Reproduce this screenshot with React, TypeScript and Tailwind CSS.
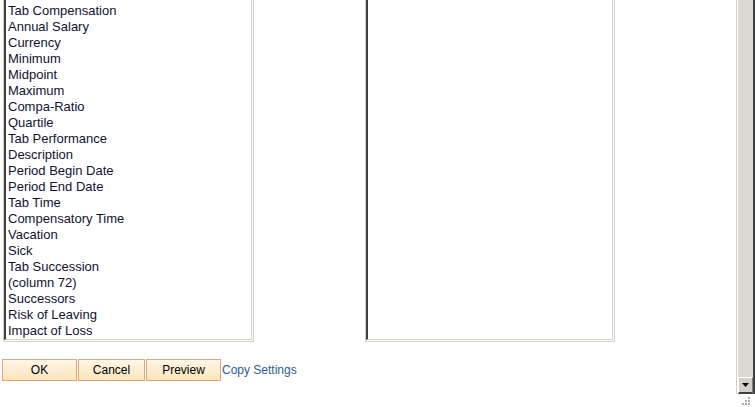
const leftItems = [
  "Tab Compensation",
  "Annual Salary",
  "Currency",
  "Minimum",
  "Midpoint",
  "Maximum",
  "Compa-Ratio",
  "Quartile",
  "Tab Performance",
  "Description",
  "Period Begin Date",
  "Period End Date",
  "Tab Time",
  "Compensatory Time",
  "Vacation",
  "Sick",
  "Tab Succession",
  "(column 72)",
  "Successors",
  "Risk of Leaving",
  "Impact of Loss",
];

const ListBox = ({ items, className }: { items: string[]; className?: string }) => {
  return (
    <div className={`h-[342px] border-l border-r border-b border-[#d4d0c8] bg-white pr-px pb-px ${className ?? ""}`}>
      <div className="h-full border-l-2 border-l-[#404040] border-r border-b border-r-[#d4d0c8] border-b-[#d4d0c8] pl-[2px] pt-[3px] overflow-hidden">
        {items.map((item) => (
          <div key={item} className="h-4 leading-4 text-[13px] text-[#111133] whitespace-nowrap">
            {item}
          </div>
        ))}
      </div>
    </div>
  );
};

const PsButton = ({ label, width }: { label: string; width: string }) => {
  return (
    <button
      type="button"
      className={`${width} h-[22px] border border-[#dba978] bg-gradient-to-b from-[#fef6e6] to-[#fce5bc] text-[12px] text-black leading-none`}
    >
      {label}
    </button>
  );
};

export default function App() {
  return (
    <div className="flex w-[755px] h-[407px] bg-white overflow-hidden" style={{ fontFamily: '"Liberation Sans", Arial, sans-serif' }}>
      <div className="flex-1 flex flex-col">
        <div className="flex items-start pl-[3px]">
          <ListBox items={leftItems} className="w-[251px]" />
          <ListBox items={[]} className="w-[250px] ml-[111px]" />
        </div>
        <div className="flex items-center gap-px pl-[2px] mt-[17px]">
          <PsButton label="OK" width="w-[75px]" />
          <PsButton label="Cancel" width="w-[67px]" />
          <PsButton label="Preview" width="w-[75px]" />
          <a href="#" className="text-[12px] text-[#2c5c9c]">
            Copy Settings
          </a>
        </div>
      </div>
      <div className="w-[19px] flex flex-col">
        <div className="flex-1 flex border-l border-[#d4d0c8] pl-px">
          <div className="flex-1 flex flex-col bg-[#dcd9d2] border-r-2 border-[#404040]">
            <div className="flex-1" />
            <div className="h-[17px] border-t border-l border-white border-b-2 border-r border-b-[#404040] border-r-[#808080] bg-[#d4d0c8] flex items-center justify-center">
              <svg width="7" height="4" viewBox="0 0 7 4">
                <polygon points="0,0 7,0 3.5,4" fill="#000" />
              </svg>
            </div>
          </div>
        </div>
        <div className="h-[13px] flex items-center justify-center">
          <svg width="10" height="10" viewBox="0 0 10 10">
            <rect x="7" y="1" width="2" height="2" fill="#b0aca4" />
            <rect x="4" y="4" width="2" height="2" fill="#b0aca4" />
            <rect x="7" y="4" width="2" height="2" fill="#b0aca4" />
            <rect x="1" y="7" width="2" height="2" fill="#b0aca4" />
            <rect x="4" y="7" width="2" height="2" fill="#b0aca4" />
            <rect x="7" y="7" width="2" height="2" fill="#b0aca4" />
          </svg>
        </div>
      </div>
    </div>
  );
}
